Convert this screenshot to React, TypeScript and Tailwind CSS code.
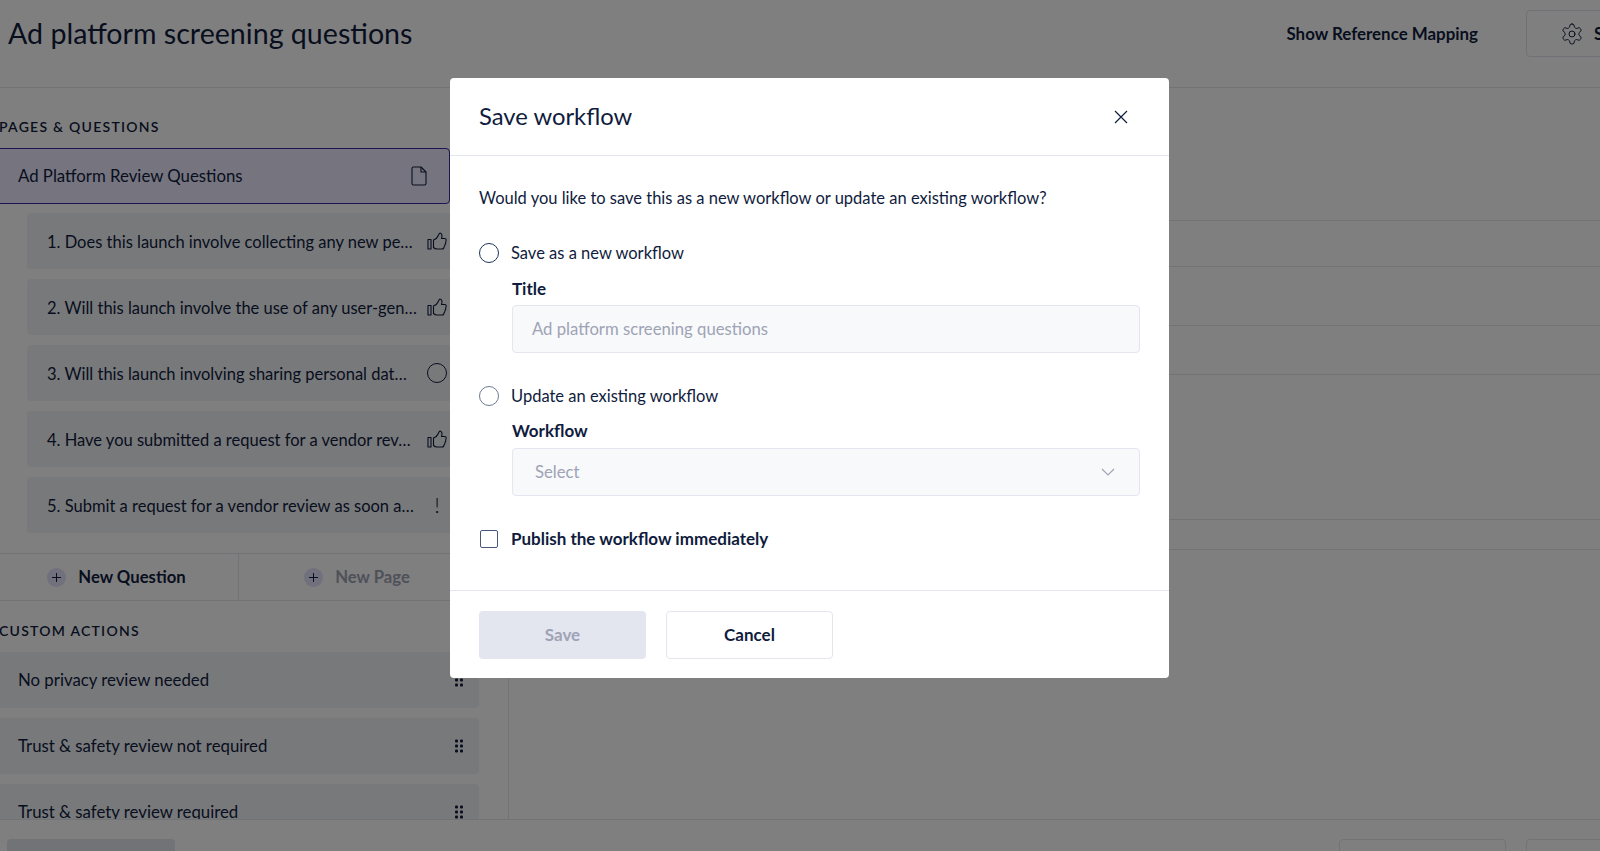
import React from 'react';

const questions = [
  { text: '1. Does this launch involve collecting any new pe…', status: 'up' },
  { text: '2. Will this launch involve the use of any user-gen…', status: 'up' },
  { text: '3. Will this launch involving sharing personal dat…', status: 'open' },
  { text: '4. Have you submitted a request for a vendor rev…', status: 'up' },
  { text: '5. Submit a request for a vendor review as soon a…', status: 'alert' },
];

const actions = ['No privacy review needed', 'Trust & safety review not required', 'Trust & safety review required'];

const ThumbIcon: React.FC = () => (
  <svg className="shrink-0" width="20" height="18" viewBox="0 0 20 18" fill="none" stroke="currentColor" strokeWidth="1.1" strokeLinejoin="round">
    <rect x="1" y="7.5" width="3" height="9.5" />
    <path d="M6.5 8 C9 7 10.5 5.5 11 4 C11.5 2.5 12 1.5 13 1 C15 1.5 15.5 3.5 14.5 6.5 L18 6.5 C19.5 7 19.5 8.5 18.7 9.5 C19 11 18.5 12 18 12.5 C18 14 17.5 14.5 17 15 C17 16.5 16 17 15 17 L10 17 C8.5 17 7.5 16.5 6.5 15.5 Z" />
  </svg>
);

const DocIcon: React.FC = () => (
  <svg className="shrink-0" width="16" height="20" viewBox="0 0 16 20" fill="none" stroke="currentColor" strokeWidth="1.1" strokeLinejoin="round">
    <path d="M2.5 1 L10 1 L15 6 L15 17.5 C15 18.5 14.3 19 13.5 19 L2.5 19 C1.5 19 1 18.5 1 17.5 L1 2.5 C1 1.5 1.5 1 2.5 1 Z" />
    <path d="M10 1 L10 6 L15 6" />
  </svg>
);

const GearIcon: React.FC = () => (
  <svg className="shrink-0" width="24" height="24" viewBox="0 0 24 24" fill="none" stroke="currentColor" strokeWidth="1" strokeLinecap="round" strokeLinejoin="round">
    <path d="M12.22 2h-.44a2 2 0 0 0-2 2v.18a2 2 0 0 1-1 1.73l-.43.25a2 2 0 0 1-2 0l-.15-.08a2 2 0 0 0-2.73.73l-.22.38a2 2 0 0 0 .73 2.73l.15.1a2 2 0 0 1 1 1.72v.51a2 2 0 0 1-1 1.74l-.15.09a2 2 0 0 0-.73 2.73l.22.38a2 2 0 0 0 2.73.73l.15-.08a2 2 0 0 1 2 0l.43.25a2 2 0 0 1 1 1.73V20a2 2 0 0 0 2 2h.44a2 2 0 0 0 2-2v-.18a2 2 0 0 1 1-1.73l.43-.25a2 2 0 0 1 2 0l.15.08a2 2 0 0 0 2.73-.73l.22-.39a2 2 0 0 0-.73-2.73l-.15-.08a2 2 0 0 1-1-1.74v-.5a2 2 0 0 1 1-1.74l.15-.09a2 2 0 0 0 .73-2.73l-.22-.38a2 2 0 0 0-2.73-.73l-.15.08a2 2 0 0 1-2 0l-.43-.25a2 2 0 0 1-1-1.73V4a2 2 0 0 0-2-2z" />
    <circle cx="12" cy="12" r="3" />
  </svg>
);

const GripIcon: React.FC = () => (
  <svg className="shrink-0" width="10" height="14" viewBox="0 0 10 14" fill="currentColor">
    <rect x="1" y="0.5" width="3" height="3" rx="1" />
    <rect x="6" y="0.5" width="3" height="3" rx="1" />
    <rect x="1" y="5.5" width="3" height="3" rx="1" />
    <rect x="6" y="5.5" width="3" height="3" rx="1" />
    <rect x="1" y="10.5" width="3" height="3" rx="1" />
    <rect x="6" y="10.5" width="3" height="3" rx="1" />
  </svg>
);

const PlusBadge: React.FC = () => (
  <span className="flex h-[19px] w-[19px] shrink-0 items-center justify-center rounded-full bg-[#e3e0fa] text-[#101c3d]">
    <svg width="9" height="9" viewBox="0 0 9 9" fill="none" stroke="currentColor" strokeWidth="1">
      <path d="M4.5 0 V9 M0 4.5 H9" />
    </svg>
  </span>
);

const StatusIcon: React.FC<{ status: string }> = ({ status }) => {
  if (status === 'up') return <ThumbIcon />;
  if (status === 'open') return <span className="h-[20px] w-[20px] shrink-0 rounded-full border border-[#101c3d]" />;
  return <span className="flex w-[20px] shrink-0 justify-center text-[22px] leading-none font-light">!</span>;
};

const Sidebar: React.FC = () => (
  <aside className="flex w-[509px] shrink-0 flex-col overflow-hidden border-r border-[#e3e6ef] pr-[29px]">
    <h2 className="-ml-[1px] mt-[29px] shrink-0 text-[14px] leading-[20px] font-semibold tracking-[1.25px] text-[#101c3d]">PAGES &amp; QUESTIONS</h2>
    <div className="-ml-[10px] mt-[11px] flex h-[56px] w-[460px] shrink-0 items-center justify-between rounded-[4px] border border-[#3b2a9e] bg-[#ebe9ff] pl-[27px] pr-[22px] text-[16.8px]">
      <span>Ad Platform Review Questions</span>
      <DocIcon />
    </div>
    <div className="ml-[27px] mt-[9px] flex shrink-0 flex-col gap-[10px]">
      {questions.map((q) => (
        <div key={q.text} className="flex h-[56px] items-center rounded-[4px] bg-[#f0f2f7] pl-[20px] text-[16.5px]">
          <span className="w-[380px] whitespace-nowrap pt-[2px]">{q.text}</span>
          <StatusIcon status={q.status} />
        </div>
      ))}
    </div>
    <div className="-ml-[10px] mt-[20px] flex h-[48px] shrink-0 border-y border-[#e3e6ef] text-[16.7px] font-bold">
      <button className="flex w-[249px] items-center justify-center gap-[12px] border-r border-[#e3e6ef] pl-[5px] pt-[1px]">
        <PlusBadge />
        New Question
      </button>
      <button className="flex flex-1 items-center justify-center gap-[12px] pr-[4px] pt-[1px] text-[#9ea3b5]">
        <PlusBadge />
        New Page
      </button>
    </div>
    <h2 className="-ml-[1px] mt-[20px] shrink-0 text-[14px] leading-[20px] font-semibold tracking-[1.25px] text-[#101c3d]">CUSTOM ACTIONS</h2>
    <div className="-ml-[10px] mt-[11px] flex flex-col gap-[10px]">
      {actions.map((a) => (
        <div key={a} className="flex h-[56px] shrink-0 items-center justify-between rounded-[4px] bg-[#f0f2f7] pl-[28px] pr-[15px] text-[16.8px]">
          <span>{a}</span>
          <GripIcon />
        </div>
      ))}
    </div>
  </aside>
);

const Radio: React.FC<{ label: string; muted?: boolean }> = ({ label, muted }) => (
  <div className="flex items-center gap-[12px]">
    <span className={`h-[20px] w-[20px] shrink-0 rounded-full border ${muted ? 'border-[#6b7a94]' : 'border-[#1d3557]'}`} />
    <span className="text-[16.5px] leading-[24px]">{label}</span>
  </div>
);

const SaveModal: React.FC = () => (
  <div className="absolute inset-0 flex items-start justify-center bg-black/50 pl-[19px] pt-[78px]">
    <div className="w-[719px] rounded-[4px] bg-white">
      <div className="flex h-[78px] items-center justify-between border-b border-[#e3e6ef] pl-[29px] pr-[41px]">
        <h3 className="text-[23.8px] font-normal">Save workflow</h3>
        <svg width="14" height="14" viewBox="0 0 14 14" fill="none" stroke="currentColor" strokeWidth="1.2">
          <path d="M1 1 L13 13 M13 1 L1 13" />
        </svg>
      </div>
      <div className="flex h-[435px] flex-col border-b border-[#e3e6ef] pl-[29px] pr-[29px] pt-[30px]">
        <p className="text-[16.5px] leading-[24px]">Would you like to save this as a new workflow or update an existing workflow?</p>
        <div className="mt-[31px]">
          <Radio label="Save as a new workflow" />
        </div>
        <div className="ml-[33px] mt-[12px]">
          <label className="block text-[17px] leading-[24px] font-bold">Title</label>
          <div className="mt-[4px] flex h-[48px] items-center rounded-[4px] border border-[#e3e6ef] bg-[#f8f9fb] pl-[19px] pt-[2px] text-[16.7px] text-[#9ea3b5]">
            Ad platform screening questions
          </div>
        </div>
        <div className="mt-[31px]">
          <Radio label="Update an existing workflow" muted />
        </div>
        <div className="ml-[33px] mt-[11px]">
          <label className="block text-[17px] leading-[24px] font-bold">Workflow</label>
          <div className="mt-[5px] flex h-[48px] items-center justify-between rounded-[4px] border border-[#e3e6ef] bg-[#f8f9fb] pl-[22px] pr-[24px] text-[16.7px] text-[#9ea3b5]">
            <span className="pt-[2px]">Select</span>
            <svg width="14" height="8" viewBox="0 0 14 8" fill="none" stroke="currentColor" strokeWidth="1.1">
              <path d="M1 1 L7 7 L13 1" />
            </svg>
          </div>
        </div>
        <div className="mt-[31px] flex items-center gap-[13px] pl-[1px]">
          <span className="h-[18px] w-[18px] shrink-0 rounded-[2px] border border-[#4a5878]" />
          <span className="text-[17px] leading-[24px] font-bold">Publish the workflow immediately</span>
        </div>
      </div>
      <div className="flex h-[87px] items-center gap-[20px] pl-[29px]">
        <button className="h-[48px] w-[167px] rounded-[4px] bg-[#e3e6ef] text-[17px] font-bold text-[#9ea3b5]">Save</button>
        <button className="h-[48px] w-[167px] rounded-[4px] border border-[#e3e6ef] text-[17px] font-bold">Cancel</button>
      </div>
    </div>
  </div>
);

const App: React.FC = () => {
  return (
    <div className="relative flex h-[851px] w-[1600px] flex-col overflow-hidden bg-white font-['Lato','Noto_Sans',sans-serif] text-[#101c3d]">
      <header className="flex h-[88px] shrink-0 items-start justify-between border-b border-[#e3e6ef] pl-[8px]">
        <h1 className="mt-[13px] text-[28.6px] leading-[40px] font-normal">Ad platform screening questions</h1>
        <div className="mt-[10px] flex items-center gap-[48px]">
          <span className="text-[16.9px] font-bold">Show Reference Mapping</span>
          <button className="-mr-[40px] flex h-[47px] w-[114px] shrink-0 items-center gap-[10px] rounded-[4px] border border-[#dfe2ec] pl-[33px] text-[16.9px] font-bold">
            <GearIcon />
            Settings
          </button>
        </div>
      </header>
      <main className="flex min-h-0 flex-1">
        <Sidebar />
        <section className="flex-1">
          <div className="mt-[132px] h-[47px] border-y border-[#e3e6ef]" />
          <div className="h-[59px] border-b border-[#e3e6ef]" />
          <div className="h-[49px] border-b border-[#e3e6ef]" />
          <div className="h-[145px] border-b border-[#e3e6ef]" />
          <div className="h-[30px] border-b border-[#e3e6ef]" />
        </section>
      </main>
      <footer className="flex h-[32px] shrink-0 justify-between border-t border-[#e3e6ef] pl-[7px] pt-[19px]">
        <div className="h-[40px] w-[168px] shrink-0 rounded-[4px] bg-[#e3e6ef]" />
        <div className="flex gap-[20px]">
          <div className="h-[40px] w-[167px] shrink-0 rounded-[4px] border border-[#e3e6ef]" />
          <div className="-mr-[40px] h-[40px] w-[114px] shrink-0 rounded-[4px] border border-[#e3e6ef]" />
        </div>
      </footer>
      <SaveModal />
    </div>
  );
};

export default App;
